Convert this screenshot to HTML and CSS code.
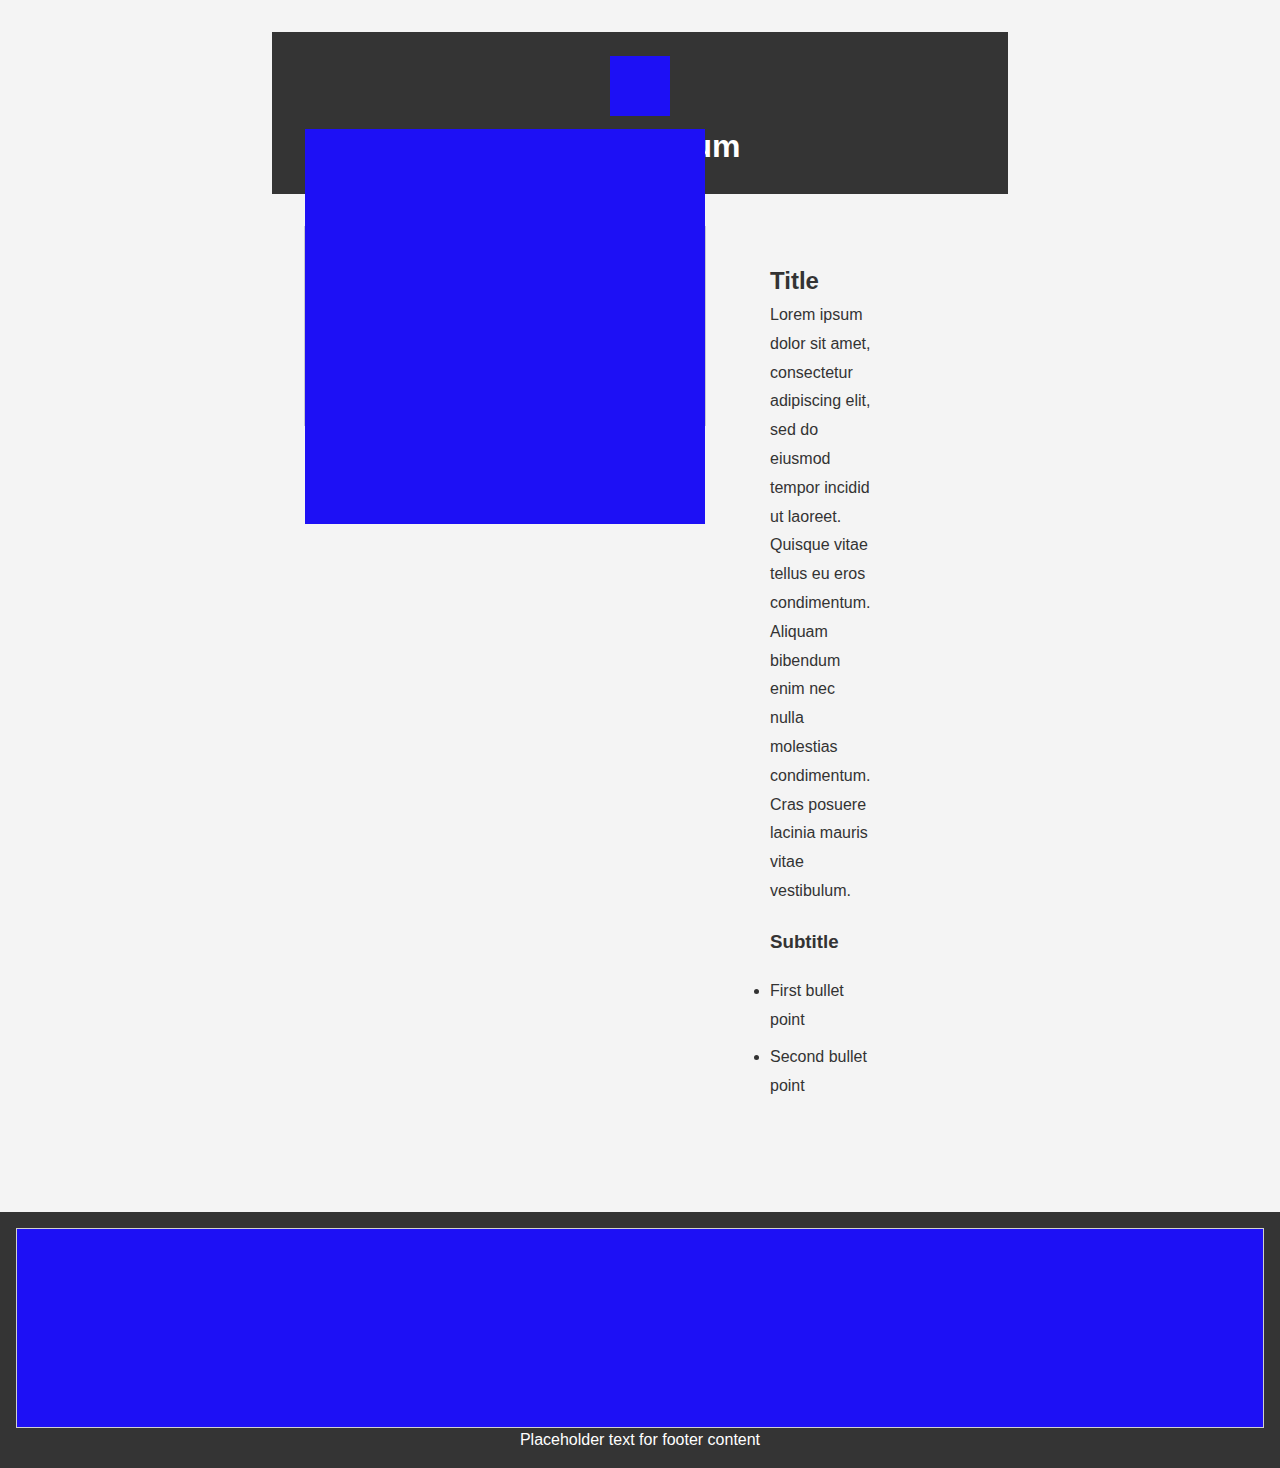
FILE: index.html
```html
<!DOCTYPE html>
<html lang="en">
<head>
<meta charset="utf-8">
<title>Lorem Ipsum</title>
<link rel="stylesheet" href="styles.css">
</head>
<body>
<header class="site-header">
  <div class="logo"></div>
  <h1 class="site-title">Lorem Ipsum</h1>
</header>
<main class="main">
  <figure class="media-frame">
    <div class="media"></div>
  </figure>
  <section class="content">
    <h2 class="content-title">Title</h2>
    <p class="content-text">Lorem ipsum dolor sit amet, consectetur adipiscing elit, sed do eiusmod tempor incidid ut laoreet. Quisque vitae tellus eu eros condimentum. Aliquam bibendum enim nec nulla molestias condimentum. Cras posuere lacinia mauris vitae vestibulum.</p>
    <h3 class="content-subtitle">Subtitle</h3>
    <ul class="content-list">
      <li>First bullet point</li>
      <li>Second bullet point</li>
    </ul>
  </section>
</main>
<footer class="site-footer">
  <div class="footer-media"></div>
  <p class="footer-text">Placeholder text for footer content</p>
</footer>
</body>
</html>
```

FILE: styles.css
```css
* { box-sizing: border-box; }

html, body {
  margin: 0;
  padding: 0;
}

body {
  background: #f4f4f4;
  color: #333;
  font-family: "Liberation Sans", Arial, sans-serif;
  font-size: 16px;
}

.site-header {
  width: 736px;
  margin: 32px auto 0;
  background: #343434;
  padding: 24px 0;
  display: flex;
  flex-direction: column;
  align-items: center;
}

.logo {
  width: 60px;
  height: 60px;
  background: #1d10f5;
  margin-bottom: 6px;
}

.site-title {
  margin: 0;
  color: #fff;
  font-size: 32px;
  font-weight: bold;
  line-height: 48px;
}

.main {
  width: 736px;
  margin: 0 auto;
  padding: 32px 32px 95px;
  display: flex;
  align-items: flex-start;
  gap: 64px;
}

.media-frame {
  margin: 0;
  flex: 0 0 auto;
  width: 402px;
  height: 200px;
  border: 1px solid #c8c8d0;
  display: flex;
  align-items: center;
}

.media {
  flex: 0 0 auto;
  width: 400px;
  height: 395px;
  background: #1d10f5;
  position: relative;
  z-index: 1;
}

.content {
  width: 102px;
  flex: 0 0 auto;
  line-height: 1.8;
}

.content-title {
  margin: 35px 0 0;
  font-size: 24px;
  line-height: 40px;
  font-weight: bold;
}

.content-text {
  margin: 0;
}

.content-subtitle {
  font-size: 18.72px;
  font-weight: bold;
  margin: 19.72px 0 17.72px;
  line-height: 1.8;
}

.content-list {
  margin: 0 0 16px;
  padding: 0;
  list-style: disc outside;
}

.content-list li {
  margin-bottom: 9px;
}

.site-footer {
  background: #343434;
  padding: 16px;
  color: #fff;
  text-align: center;
}

.footer-media {
  height: 200px;
  background: #1d10f5;
  border: 1px solid #d0d0d0;
}

.footer-text {
  margin: 0;
  line-height: 24px;
}
```
